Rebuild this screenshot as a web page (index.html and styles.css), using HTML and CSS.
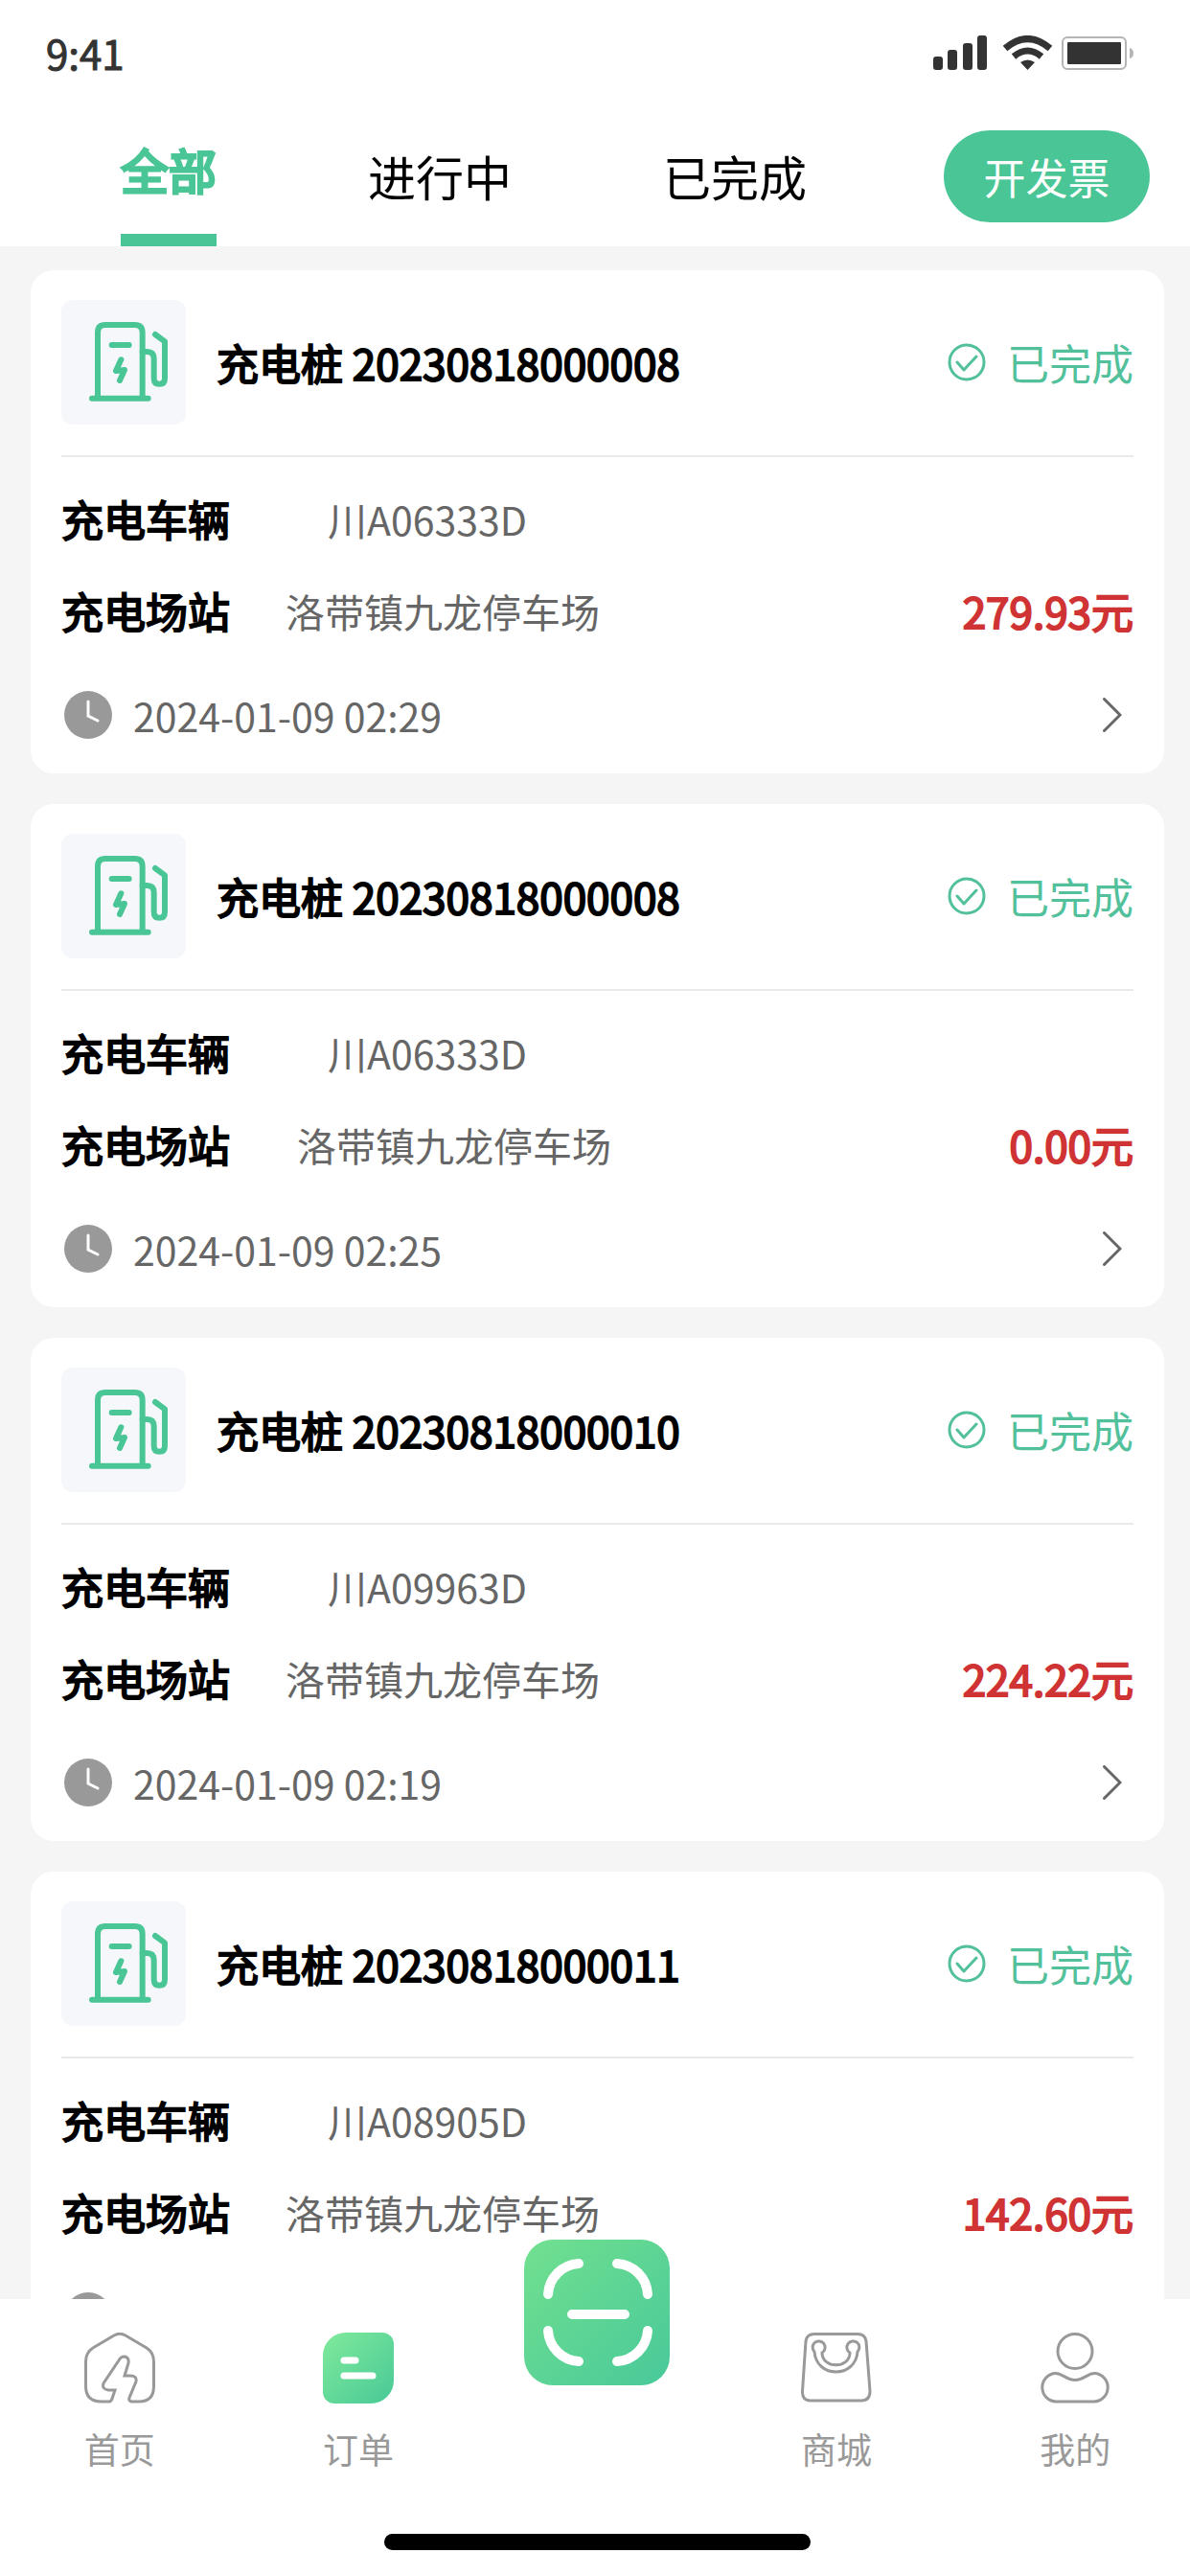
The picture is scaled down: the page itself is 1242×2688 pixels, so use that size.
FILE: index.html
```html
<!DOCTYPE html>
<html lang="zh-CN">
<head>
    <meta charset="UTF-8">
    <meta name="viewport" content="width=device-width, initial-scale=1.0">
    <title>订单</title>
    <link rel="stylesheet" href="styles.css">
</head>
<body>

    <!-- 公用图标 -->
    <svg class="sprite" aria-hidden="true">
        <symbol id="pump" viewBox="10 10 390 390">
            <g fill="none" stroke="#4ac696" stroke-width="18" stroke-linecap="round" stroke-linejoin="round">
                <path d="M124 316V112Q124 88 148 88H240Q264 88 264 112V316"/>
                <path d="M106 318H282M168 151H222"/>
                <path d="M197 197L181 232L208 229L193 262"/>
                <path d="M264 172H278Q300 172 300 194V255Q300 273 317 273Q334 273 334 255V140L304 118"/>
            </g>
        </symbol>
        <symbol id="check" viewBox="0 0 40 40">
            <g fill="none" stroke="#52c19b" stroke-width="3" stroke-linecap="round" stroke-linejoin="round">
                <circle cx="20" cy="20" r="18"/>
                <path d="M10 20L17 28L30 14"/>
            </g>
        </symbol>
        <symbol id="clock" viewBox="0 0 50 50">
            <circle cx="25" cy="25" r="25" fill="#999"/>
            <path d="M25 11V26L35 31" fill="none" stroke="#fff" stroke-width="3" stroke-linecap="round"/>
        </symbol>
        <symbol id="arrow" viewBox="0 0 20 36">
            <path d="M1.5 1.5L18 18L1.5 34.5" fill="none" stroke="#666" stroke-width="3" stroke-linecap="round"/>
        </symbol>
    </svg>

    <div class="app">
        <header class="header">
            <div class="status-bar">
                <span>9:41</span>
                <svg width="210" height="36" viewBox="0 0 210 36" fill="#333">
                    <rect x="0" y="22" width="10" height="14" rx="3"/>
                    <rect x="15" y="15" width="10" height="21" rx="3"/>
                    <rect x="31" y="8" width="10" height="28" rx="3"/>
                    <rect x="46" y="0" width="10" height="36" rx="3"/>
                    <path d="M75 13.5Q98.5 -6.5 122 13.5" fill="none" stroke="#333" stroke-width="7"/>
                    <path d="M84 22Q98.5 10 113 22" fill="none" stroke="#333" stroke-width="7"/>
                    <path d="M91 28Q98.5 23 106 28L98.5 36Z"/>
                    <rect x="135" y="2" width="66" height="33" rx="5" fill="none" stroke="#b5b5b5" stroke-width="2"/>
                    <rect x="140" y="7" width="56" height="23" rx="1"/>
                    <path d="M205 13Q209 14 209 18.5T205 24Z" fill="#b5b5b5"/>
                </svg>
            </div>
            <div class="tab-row">
                <nav class="tabs">
                    <button class="tab active">全部</button>
                    <button class="tab">进行中</button>
                    <button class="tab">已完成</button>
                </nav>
                <button class="invoice">开发票</button>
            </div>
        </header>

        <main class="list">
            <article class="card">
                <div class="card-head">
                    <svg class="pump"><use href="#pump"/></svg>
                    <h2 class="title">充电桩 20230818000008</h2>
                    <span class="state"><svg class="check"><use href="#check"/></svg>已完成</span>
                </div>
                <div class="row">
                    <span class="label">充电车辆</span>
                    <span class="value plate">川A06333D</span>
                </div>
                <div class="row">
                    <span class="label">充电场站</span>
                    <span class="value">洛带镇九龙停车场</span>
                    <span class="price">279.93元</span>
                </div>
                <a class="card-foot" href="#">
                    <svg class="clock"><use href="#clock"/></svg>
                    <time>2024-01-09 02:29</time>
                    <svg class="arrow"><use href="#arrow"/></svg>
                </a>
            </article>

            <article class="card">
                <div class="card-head">
                    <svg class="pump"><use href="#pump"/></svg>
                    <h2 class="title">充电桩 20230818000008</h2>
                    <span class="state"><svg class="check"><use href="#check"/></svg>已完成</span>
                </div>
                <div class="row">
                    <span class="label">充电车辆</span>
                    <span class="value plate">川A06333D</span>
                </div>
                <div class="row">
                    <span class="label">充电场站</span>
                    <span class="value free">洛带镇九龙停车场</span>
                    <span class="price">0.00元</span>
                </div>
                <a class="card-foot" href="#">
                    <svg class="clock"><use href="#clock"/></svg>
                    <time>2024-01-09 02:25</time>
                    <svg class="arrow"><use href="#arrow"/></svg>
                </a>
            </article>

            <article class="card">
                <div class="card-head">
                    <svg class="pump"><use href="#pump"/></svg>
                    <h2 class="title">充电桩 20230818000010</h2>
                    <span class="state"><svg class="check"><use href="#check"/></svg>已完成</span>
                </div>
                <div class="row">
                    <span class="label">充电车辆</span>
                    <span class="value plate">川A09963D</span>
                </div>
                <div class="row">
                    <span class="label">充电场站</span>
                    <span class="value">洛带镇九龙停车场</span>
                    <span class="price">224.22元</span>
                </div>
                <a class="card-foot" href="#">
                    <svg class="clock"><use href="#clock"/></svg>
                    <time>2024-01-09 02:19</time>
                    <svg class="arrow"><use href="#arrow"/></svg>
                </a>
            </article>

            <article class="card">
                <div class="card-head">
                    <svg class="pump"><use href="#pump"/></svg>
                    <h2 class="title">充电桩 20230818000011</h2>
                    <span class="state"><svg class="check"><use href="#check"/></svg>已完成</span>
                </div>
                <div class="row">
                    <span class="label">充电车辆</span>
                    <span class="value plate">川A08905D</span>
                </div>
                <div class="row">
                    <span class="label">充电场站</span>
                    <span class="value">洛带镇九龙停车场</span>
                    <span class="price">142.60元</span>
                </div>
                <a class="card-foot" href="#">
                    <svg class="clock"><use href="#clock"/></svg>
                    <svg class="arrow"><use href="#arrow"/></svg>
                </a>
            </article>
        </main>

        <footer class="footer">
            <nav class="tabbar">
                <a class="nav-item" href="#">
                    <svg class="nav-icon" viewBox="0 0 74 74">
                        <path d="M26 72H18Q1.5 72 1.5 56V30Q1.5 21 9 16L31 3Q37 -0.5 43 3L65 16Q72.5 21 72.5 30V56Q72.5 72 57 72H49Q46 71 47 68L54 51Q55 45 48 45H42L46 32Q47 26 42 25Q38 25 36 29L20 53Q18 59 25 60H32L29 69Q28 72 26 72Z"/>
                    </svg>
                    首页
                </a>
                <a class="nav-item" href="#">
                    <svg class="nav-icon solid" viewBox="0 0 74 74">
                        <defs>
                            <linearGradient id="order-bg" x1="0" y1="0" x2="1" y2="1">
                                <stop offset="0" stop-color="#80ea9b"/>
                                <stop offset="1" stop-color="#48c997"/>
                            </linearGradient>
                        </defs>
                        <path fill="url(#order-bg)" d="M24 0H62A12 12 0 0 1 74 12V50A24 24 0 0 1 50 74H12A12 12 0 0 1 0 62V24A24 24 0 0 1 24 0Z"/>
                        <path d="M22 29H34M22 45H52" stroke="#fff" stroke-width="7" stroke-linecap="round"/>
                    </svg>
                    订单
                </a>
                <a class="scan" href="#" aria-label="扫码">
                    <svg viewBox="0 0 152 152">
                        <defs>
                            <linearGradient id="scan-bg" x1="0" y1="0" x2="1" y2="1">
                                <stop offset="0" stop-color="#72e08f"/>
                                <stop offset="1" stop-color="#48c99a"/>
                            </linearGradient>
                        </defs>
                        <rect width="152" height="152" rx="30" fill="url(#scan-bg)"/>
                        <path d="M25 57A34 34 0 0 1 57 25M97 25A34 34 0 0 1 129 57M129 95A34 34 0 0 1 97 127M57 127A34 34 0 0 1 25 95M50 78H105" fill="none" stroke="#fff" stroke-width="10" stroke-linecap="round"/>
                    </svg>
                </a>
                <a class="nav-item" href="#">
                    <svg class="nav-icon" viewBox="0 0 74 74">
                        <path d="M14 1.5H59Q67 1.5 68 9L72 61Q72 71 63 71H10Q1 71 1.5 61L5 9Q6 1.5 14 1.5Z"/>
                        <path d="M22 21C22 38 51 38 51 21A6.5 6.5 0 1 1 59 20C57 48 16 48 14 20A6.5 6.5 0 1 1 22 21Z"/>
                    </svg>
                    商城
                </a>
                <a class="nav-item" href="#">
                    <svg class="nav-icon" viewBox="0 0 74 74">
                        <circle cx="37" cy="19.5" r="18"/>
                        <path d="M17 72H57A14.8 14.8 0 0 0 58 42.5C50 42 47 49.5 37 49.5S24 42 16 42.5A14.8 14.8 0 0 0 17 72Z"/>
                    </svg>
                    我的
                </a>
            </nav>
            <div class="home-bar"></div>
        </footer>
    </div>

</body>
</html>
```
FILE: styles.css
```css
* {
    box-sizing: border-box;
}
body {
    margin: 0;
    background-color: #fff;
    font-family: "Noto Sans CJK SC", sans-serif;
    color: #000;
}
button {
    padding: 0;
    border: none;
    background: none;
    font-family: inherit;
    color: inherit;
    cursor: pointer;
}
a {
    color: inherit;
    text-decoration: none;
}
svg {
    display: block;
    flex: none;
}
.sprite {
    position: absolute;
    width: 0;
    height: 0;
}
.app {
    display: flex;
    flex-direction: column;
    height: 100vh;
    overflow: hidden;
}

/* 顶部 */
.header {
    flex: none;
}
.status-bar {
    display: flex;
    justify-content: space-between;
    align-items: center;
    height: 114px;
    padding: 0 58px 5px 48px;
    font-size: 42px;
    color: #333;
    -webkit-text-stroke: 1px;
}
.tab-row {
    display: flex;
    justify-content: space-between;
    align-items: center;
    height: 143px;
    padding: 0 42px 0 126px;
}
.tabs {
    display: flex;
    gap: 158px;
    height: 100%;
}
.tab {
    padding-bottom: 6px;
    font-size: 50px;
    line-height: 60px;
}
.tab.active {
    color: #4ac696;
    border-bottom: 13px solid #4ac696;
    -webkit-text-stroke: 3px #4ac696;
}
.invoice {
    width: 215px;
    height: 96px;
    margin-bottom: 4px;
    border-radius: 48px;
    background-color: #4ac696;
    color: #fff;
    font-size: 44px;
}

/* 订单列表 */
.list {
    flex: 1;
    min-height: 0;
    display: flex;
    flex-direction: column;
    gap: 32px;
    padding: 25px 27px 0 32px;
    overflow: hidden;
    background-color: #f5f5f5;
}
.card {
    flex: none;
    padding: 31px 32px 20px;
    border-radius: 24px;
    background-color: #fff;
}
.card-head {
    display: flex;
    align-items: center;
    padding-bottom: 32px;
    margin-bottom: 16px;
    border-bottom: 2px solid #eaeaea;
}
.pump {
    width: 130px;
    height: 130px;
    border-radius: 12px;
    background-color: #f5f7fa;
}
.title,
.label,
.price {
    font-size: 44px;
    font-weight: 400;
    -webkit-text-stroke: 2px;
}
.title {
    margin: 0 0 0 32px;
}
.state {
    display: flex;
    align-items: center;
    gap: 22px;
    margin-left: auto;
    color: #52c19b;
    font-size: 44px;
}
.check {
    width: 40px;
    height: 40px;
}
.row {
    display: flex;
    align-items: center;
    height: 96px;
}
.value {
    margin-left: 58px;
    font-size: 41px;
    color: #666;
}
.value.free {
    margin-left: 70px;
}
.value.plate {
    margin-left: 102px;
}
.price {
    margin-left: auto;
    color: #cf3333;
}
.card-foot {
    display: flex;
    align-items: center;
    height: 83px;
    margin-top: 19px;
    padding: 0 12px 0 3px;
    font-size: 41px;
    color: #666;
}
.clock {
    width: 50px;
    height: 50px;
    margin-right: 22px;
}
.arrow {
    width: 20px;
    height: 36px;
    margin-left: auto;
}

/* 底部导航 */
.footer {
    flex: none;
    width: calc(100% + 5px);
    height: 289px;
    background-color: #fff;
}
.tabbar {
    display: grid;
    grid-template-columns: repeat(5, 1fr);
    height: 245px;
}
.nav-item {
    display: flex;
    flex-direction: column;
    align-items: center;
    gap: 20px;
    padding-top: 35px;
    font-size: 37px;
    line-height: 54px;
    color: #999;
}
.nav-icon {
    width: 74px;
    height: 74px;
    fill: none;
    stroke: #999;
    stroke-width: 3;
}
.nav-icon.solid {
    stroke: none;
}
.scan {
    justify-self: center;
    width: 152px;
    height: 152px;
    margin-top: -62px;
}
.home-bar {
    width: 445px;
    height: 17px;
    margin: 0 auto;
    border-radius: 9px;
    background-color: #000;
}
```
